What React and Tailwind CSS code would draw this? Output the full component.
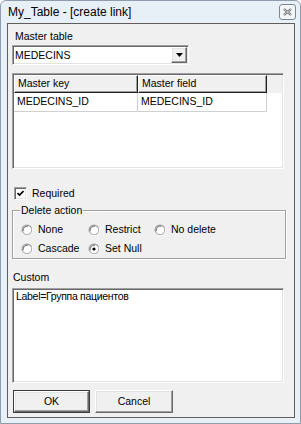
const font = { fontFamily: '"Liberation Sans", Arial, sans-serif' };

const sunken =
  "border border-t-[#a0a0a0] border-l-[#a0a0a0] border-r-white border-b-white shadow-[inset_1px_1px_0_#696969,inset_-1px_-1px_0_#e3e3e3]";
const raised =
  "border border-t-white border-l-white border-r-[#696969] border-b-[#696969] shadow-[inset_-1px_-1px_0_#a0a0a0,inset_1px_1px_0_#e3e3e3]";

const Radio = ({ checked, label }) => (
  <div className="flex items-center h-[13px]">
    <svg width="12" height="12" viewBox="0 0 12 12" className="shrink-0">
      <circle cx="6" cy="6" r="5.5" fill="#a0a0a0" />
      <path d="M1 8.5A5.5 5.5 0 0 0 11 3.5" stroke="#fff" strokeWidth="1" fill="none" />
      <circle cx="6" cy="6" r="4.3" fill="#fff" />
      <path d="M2.2 7.2A4.3 4.3 0 0 1 7.2 2.2" stroke="#696969" strokeWidth="1" fill="none" />
      {checked && <circle cx="6" cy="6" r="1.6" fill="#000" />}
    </svg>
    <span className="ml-[5px] text-[10.5px] leading-[13px] text-black">{label}</span>
  </div>
);

const Button = ({ children, isDefault, className = "" }) => (
  <div className={`h-[23px] flex items-center justify-center bg-[#f0f0f0] text-[10.5px] text-black ${className}`}>
    <div className={`w-full h-full flex items-center justify-center ${isDefault ? "border border-[#3c3c3c]" : raised}`}>
      <div className={`w-full h-full flex items-center justify-center ${isDefault ? raised : ""}`}>
        {children}
      </div>
    </div>
  </div>
);

export default function App() {
  return (
    <div
      style={font}
      className="w-[301px] h-[424px] bg-[#e8f0f7] border border-[#8f9cab] rounded-t-[6px] pl-[6px] pr-[5px] pb-[5px] flex flex-col"
    >
      {/* title bar */}
      <div className="h-[22px] flex items-center justify-between shrink-0">
        <span className="ml-[1px] text-[12px] leading-[14px] text-black">My_Table - [create link]</span>
        <div className="mr-[-1px] mt-[-1px] w-[17px] h-[16px] rounded-[3px] border border-[#7d8894] bg-[#f3f6f9] flex items-center justify-center">
          <svg width="9" height="8" viewBox="0 0 9 8">
            <path d="M1 1 L8 7 M8 1 L1 7" stroke="#555" strokeWidth="2.2" />
            <path d="M1 1 L8 7 M8 1 L1 7" stroke="#fff" strokeWidth="0.8" />
          </svg>
        </div>
      </div>

      {/* client area */}
      <div className="flex-1 border border-[#5e5e5e] bg-[#f0f0f0] pl-[4px] flex flex-col text-black">
        <div className="mt-[6px] text-[10.5px] leading-[13px] ml-[3px]">Master table</div>

        <div className={`mt-[2px] w-[177px] h-[20px] bg-white flex items-center justify-between ${sunken}`}>
          <span className="pl-[2px] text-[10.5px] leading-[13px]">MEDECINS</span>
          <div className={`w-[16px] h-[16px] mr-[1px] bg-[#f0f0f0] flex items-center justify-center ${raised}`}>
            <svg width="7" height="4" viewBox="0 0 7 4">
              <path d="M0 0H7L3.5 4Z" fill="#000" />
            </svg>
          </div>
        </div>

        {/* list view */}
        <div className={`mt-[8px] w-[272px] h-[96px] bg-white p-[1px] flex flex-col ${sunken}`}>
          <div className="flex h-[18px] shrink-0 bg-[#f0f0f0]">
            <div className="w-[124px] flex items-center pl-[3px] text-[10.5px] border-t border-l border-t-white border-l-white border-r border-b border-r-[#202020] border-b-[#202020] shadow-[inset_-1px_-1px_0_#a0a0a0]">
              Master key
            </div>
            <div className="w-[129px] flex items-center pl-[3px] text-[10.5px] border-t border-l border-t-white border-l-white border-r border-b border-r-[#202020] border-b-[#202020] shadow-[inset_-1px_-1px_0_#a0a0a0]">
              Master field
            </div>
          </div>
          <div className="flex h-[19px] shrink-0">
            <div className="w-[124px] flex items-center pl-[3px] text-[10.5px] border-r border-b border-[#d0d0d0]">
              MEDECINS_ID
            </div>
            <div className="w-[129px] flex items-center pl-[3px] text-[10.5px] border-r border-b border-[#d0d0d0]">
              MEDECINS_ID
            </div>
          </div>
        </div>

        {/* required */}
        <div className="mt-[18px] ml-[2px] flex items-center h-[13px]">
          <div className={`w-[13px] h-[13px] bg-white flex items-center justify-center ${sunken}`}>
            <svg width="7" height="7" viewBox="0 0 7 7">
              <path d="M0.5 3 L2.5 5 L6.5 1" stroke="#000" strokeWidth="1.6" fill="none" />
            </svg>
          </div>
          <span className="ml-[5px] text-[10.5px] leading-[13px]">Required</span>
        </div>

        {/* delete action group */}
        <div className="relative mt-[10px] w-[274px] h-[49px] border border-[#a0a0a0] shadow-[1px_1px_0_#fff,inset_1px_1px_0_#fff] pt-[12px] pl-[8px] flex flex-col gap-[6px]">
          <span className="absolute left-[7px] top-[-7px] bg-[#f0f0f0] px-[1px] text-[10.5px] leading-[13px]">
            Delete action
          </span>
          <div className="flex">
            <div className="w-[67px]"><Radio label="None" /></div>
            <div className="w-[66px]"><Radio label="Restrict" /></div>
            <Radio label="No delete" />
          </div>
          <div className="flex">
            <div className="w-[67px]"><Radio label="Cascade" /></div>
            <Radio label="Set Null" checked />
          </div>
        </div>

        <div className="mt-[12px] ml-[1px] text-[10.5px] leading-[13px]">Custom</div>

        <div className={`mt-[4px] w-[272px] h-[95px] bg-white pl-[3px] pt-[1px] text-[10.5px] leading-[13px] ${sunken}`}>
          <span className="tracking-[-0.3px]">Label=Группа пациентов</span>
        </div>

        <div className="mt-[7px] ml-[1px] flex gap-[5px]">
          <Button isDefault className="w-[77px]">OK</Button>
          <Button className="w-[78px]">Cancel</Button>
        </div>
      </div>
    </div>
  );
}
